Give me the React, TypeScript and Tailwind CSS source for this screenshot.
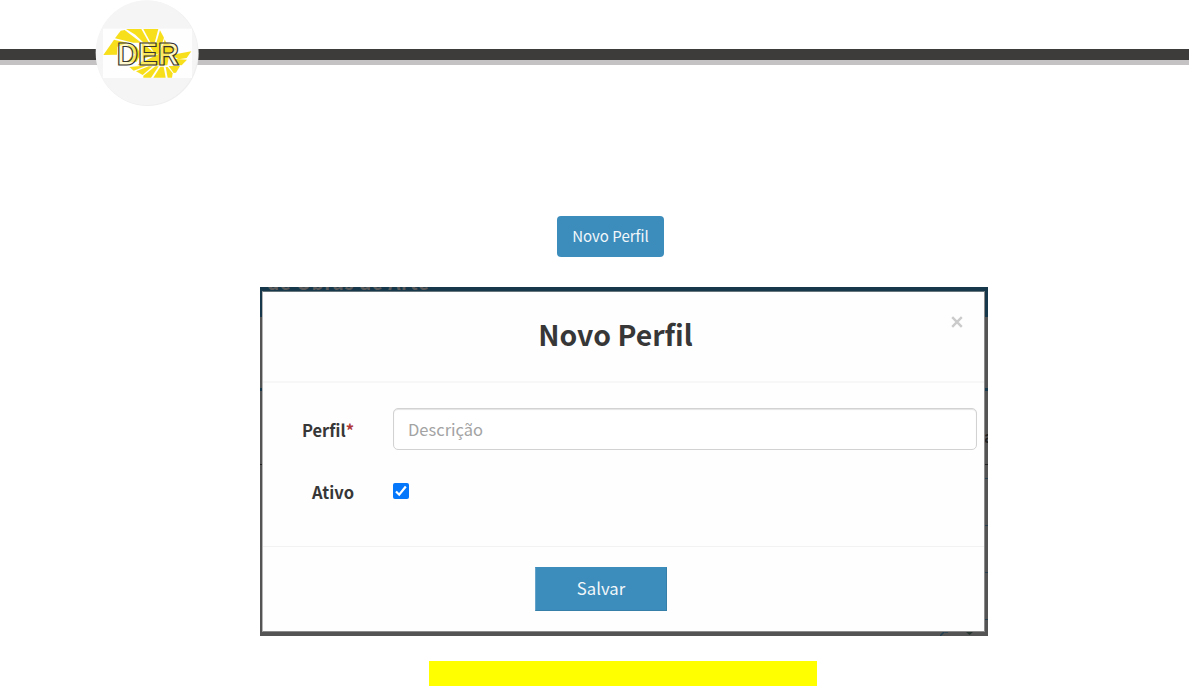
function DerLogo() {
  return (
    <svg className="block h-[110px] w-[140px]" viewBox="0 0 420 330" role="img" aria-label="DER">
      <ellipse cx="202" cy="160" rx="154" ry="158" fill="#efefef" />
      <ellipse cx="200" cy="158" rx="153" ry="157" fill="#f5f5f5" />
      <rect x="69" y="86" width="267" height="148" fill="#fefefe" />
      <g fill="#f8df1c">
        <path d="M70 165 L102 119 L142 128 L112 140 L111 164 Z" />
        <path d="M105 115 L122 92 L134 90 L184 128 L160 128 Z" />
        <path d="M138 87 L184 87 L207 128 L191 128 L166 104 Z" />
        <path d="M190 87 L235 87 L224 128 L212 128 Z" />
        <path d="M240 91 L252 113 L247 128 L229 128 Z" />
        <path d="M254 118 L259 128 L251 128 Z" />
        <path d="M142 134 L170 140 L182 162 L170 185 L142 187 L152 172 L165 165 Z" />
        <path d="M186 128 L262 128 L289 148 L268 163 L262 196 L172 196 L188 182 Z" />
        <path d="M273 165 L334 154 L320 174 L296 178 Z" />
        <path d="M280 176 L321 179 L305 196 L294 195 Z" />
        <path d="M148 201 L188 197 L200 197 L161 212 Z" />
        <path d="M168 214 L206 199 L218 199 L188 225 Z" />
        <path d="M190 227 L226 199 L236 199 L213 233 L190 233 Z" />
        <path d="M220 233 L241 200 L251 200 L257 233 Z" />
        <path d="M257 201 L263 201 L278 220 L276 233 L263 233 Z" />
        <path d="M266 198 L300 198 L288 218 L281 219 Z" />
      </g>
      <g fill="#fefefe">
        <path d="M187 128 L222 158 L203 128 Z" />
        <path d="M188 176 L240 160 L188 186 Z" />
        <path d="M247 128 L238 153 L253 128 Z" />
        <path d="M246 164 L236 196 L242 196 Z" />
      </g>
      <text x="110" y="194" textLength="187" lengthAdjust="spacingAndGlyphs" fontFamily="Liberation Sans" fontSize="92" fontWeight="700" fill="#fdf3a0" fillOpacity="0.5" stroke="#37342d" strokeWidth="3.6">DER</text>
    </svg>
  );
}

function Header() {
  return (
    <header className="relative h-[106px] pt-[49px]">
      <div className="h-4 border-b-[5px] border-[#c4c2c3] bg-[#3d3c3b]" />
      <div className="absolute left-20 top-0">
        <DerLogo />
      </div>
    </header>
  );
}

function ProfileDialog() {
  return (
    <section className="relative ml-[260px] mt-[30px] h-[349px] w-[728px] overflow-hidden bg-[#545454] pl-[2px] pt-1">
      <div className="absolute inset-x-0 top-0 h-[30px] bg-[#16384a]" />
      <div className="absolute left-[7px] top-[-19px] whitespace-nowrap text-[19px] font-bold leading-[28px] tracking-[0.55px] text-[#5b5a5b]">de Obras de Arte</div>
      <div className="absolute inset-x-0 top-[101px] h-[3px] bg-[#16384a]" />
      <div className="absolute inset-x-0 top-[177px] h-px bg-[#222]" />
      <div className="absolute right-0 top-[143px] h-4 w-1 overflow-hidden text-[15px] font-bold leading-[14px] text-[#222]">a</div>
      <div className="absolute right-0 top-[191px] h-px w-[3px] bg-[#243e50]" />
      <div className="absolute right-0 top-[238px] h-px w-[3px] bg-[#243e50]" />
      <div className="absolute right-0 top-[285px] h-px w-[3px] bg-[#243e50]" />
      <div className="absolute right-0 top-[332px] h-px w-[3px] bg-[#243e50]" />
      <svg className="absolute bottom-0 right-3 h-[5px] w-9" viewBox="0 0 36 5">
        <path d="M0 5 L5 0 M5 1 H8" stroke="#203f52" strokeWidth="1.5" />
        <path d="M26 1 H33 L29.5 4 Z" fill="#26362f" />
      </svg>
      <div className="relative flex h-[341px] w-[723px] flex-col border border-t-[#66747c] border-r-[#8b8b8b] border-b-[#8b8b8b] border-l-[#b5b5b5] bg-[#fefefe]">
        <div className="relative h-[91px] border-b-2 border-[#f7f7f7] pt-[19px] text-center">
          <h1 className="-ml-[16px] text-[28.4px] font-bold leading-[46px] text-[#373737]">Novo Perfil</h1>
          <button className="absolute right-[20px] top-[23px] h-[14px] w-[14px]" aria-label="Fechar">
            <svg viewBox="0 0 14 14" className="h-[14px] w-[14px]">
              <path d="M2.2 2.2 L11.8 11.8 M11.8 2.2 L2.2 11.8" stroke="#cbcbcb" strokeWidth="2.4" />
            </svg>
          </button>
        </div>
        <div className="flex h-[163px] flex-col pt-[25px] text-[16.5px] text-[#373737]">
          <div className="flex h-[42px] items-center">
            <label className="w-[91px] pt-[2px] text-right font-bold">Perfil<span className="text-[#b03838]">*</span></label>
            <input
              className="ml-[39px] h-[42px] w-[584px] rounded-[5px] border-[1.5px] border-[#d2d2d2] bg-white px-[14px] shadow-[inset_0_1px_1px_#e4e4e4] outline-none placeholder:text-[#a3a3a3]"
              placeholder="Descrição"
            />
          </div>
          <div className="mt-5 flex h-[42px] items-center">
            <span className="w-[91px] pt-[2px] text-right font-bold">Ativo</span>
            <span className="ml-[39px] flex h-4 w-4 items-center justify-center rounded-[2px] bg-[#0477fb]">
              <svg className="h-4 w-4" viewBox="0 0 16 16" fill="none">
                <path d="M3 8.5 L6.2 11.7 L12.8 3.5" stroke="#fff" strokeWidth="2.2" />
              </svg>
            </span>
          </div>
        </div>
        <div className="flex flex-1 justify-center border-t border-[#f2f2f2] pr-[45px] pt-5">
          <button className="h-[44px] w-[132px] border border-[#367fa9] border-l-[#65a3ca] border-t-[#3c8dbc] bg-[#3c8dbc] text-[16.7px] text-[#f2f7fa]">Salvar</button>
        </div>
      </div>
    </section>
  );
}

export default function App() {
  return (
    <main className="h-[686px] overflow-hidden bg-white font-['Noto_Sans_CJK_SC',sans-serif]">
      <Header />
      <button className="ml-[557px] mt-[110px] block h-[41px] w-[107px] rounded-[4px] bg-[#3c8dbc] text-[15px] text-[#f2f7fa]">Novo Perfil</button>
      <ProfileDialog />
      <div className="ml-[429px] mt-[25px] h-[25px] w-[388px] bg-[#ffff00]" />
    </main>
  );
}
